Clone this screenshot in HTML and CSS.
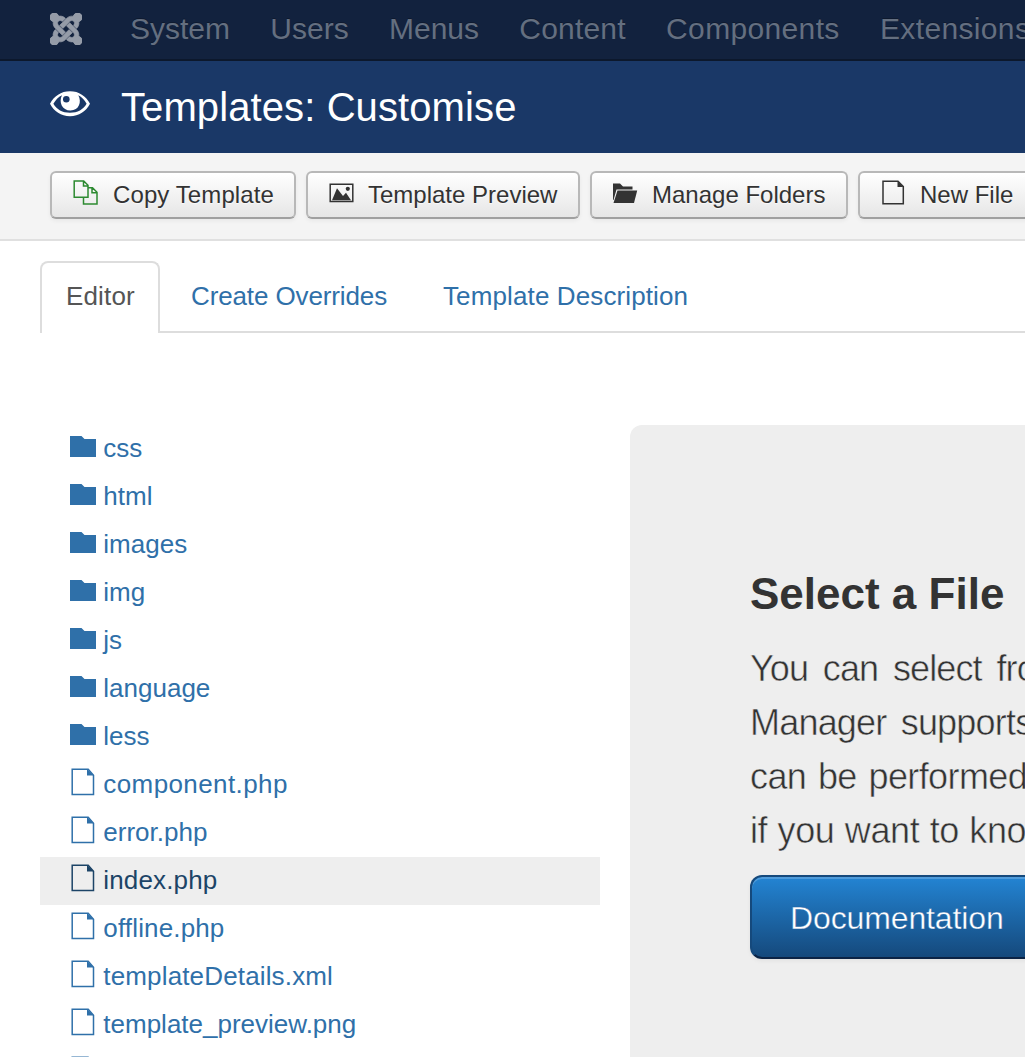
FILE: index.html
```html
<!DOCTYPE html>
<html lang="en">
<head>
<meta charset="utf-8">
<title>Templates: Customise</title>
<link rel="stylesheet" href="styles.css">
</head>
<body>
<svg class="defs" aria-hidden="true">
  <defs>
    <g id="strand"><path d="M16.719 14.759L14.22 17.26l-2.37 2.37-.462.466c-1.368 1.365-3.297 1.83-5.047 1.397-.327 1.424-1.604 2.49-3.13 2.49C1.438 23.983 0 22.547 0 20.772c0-1.518 1.055-2.789 2.469-3.123-.446-1.76.016-3.705 1.396-5.08l.179-.18 2.37 2.37-.184.181c-.769.779-.769 2.024 0 2.789.771.78 2.022.78 2.787 0l.465-.465 2.367-2.371 2.502-2.506z" stroke="currentColor" stroke-width=".5"/><circle cx="3.300" cy="20.700" r="3.500"/></g>
    <symbol id="folder" viewBox="0 0 34 48"><path fill="currentColor" d="M0 11h11.5l3 3H26v18H0z"/></symbol>
    <symbol id="file" viewBox="0 0 34 48"><path fill="none" stroke="currentColor" stroke-width="1.5" d="M2.200 8.300h16l5.300 6v19.200H2.200z"/><path fill="currentColor" d="M17 8l7 6.600h-7z"/></symbol>
  </defs>
</svg>
<nav class="navbar">
  <svg class="brand" viewBox="0 0 24 24" fill="currentColor"><use href="#strand"/><use href="#strand" transform="rotate(90 12 12)"/><use href="#strand" transform="rotate(180 12 12)"/><use href="#strand" transform="rotate(270 12 12)"/></svg>
  <a>System</a><a>Users</a><a>Menus</a><a class="content-menu">Content</a><a class="wide">Components</a><a class="wide">Extensions</a>
</nav>
<header class="header">
  <svg class="eye" viewBox="0 0 40 26"><path fill="#fff" fill-rule="evenodd" d="M0 12.8C4 5 11 .2 20 .2S36 5 40 12.8C36 20.400 29 25.200 20 25.200S4 20.400 0 12.800zM3.400 12.800C6.500 18.500 12.500 21.800 20 21.800s13.500-3.300 16.600-9C34.500 9 31.800 6 28.300 4.300 32 11 29 19.500 20.500 19.500S8.500 11 12 4.200C8.200 6 5.500 9 3.400 12.800z"/><circle cx="16.300" cy="8.200" r="3.300" fill="#1a3867"/></svg>
  <h1>Templates: Customise</h1>
</header>
<div class="toolbar">
  <button class="btn copy"><svg viewBox="0 0 26 26" fill="none" stroke="#2d8a31" stroke-width="1.500"><path d="M10.500 17.300H1.200V1h9.500l4.300 4.300v2.200M10.500 1v5H15M15 7.700h4.500l4.500 4.500v11.800H10.500v-6.700H15V5M19 7.700v5H24"/></svg>Copy Template</button>
  <button class="btn preview"><svg viewBox="0 0 26 26"><path fill="none" stroke="currentColor" stroke-width="1.500" d="M1.200 4.200h22.600v17.300H1.200z"/><path fill="currentColor" d="M3 20.300L8 8.200 14 16l3-3.200 5 7.500z"/><circle cx="18.800" cy="8.800" r="2.100" fill="currentColor"/></svg>Template Preview</button>
  <button class="btn folders"><svg viewBox="0 0 26 26" fill="currentColor"><path d="M0 3.500h7l3 3h9.500v3H3.500L.500 20H0z"/><path d="M4.500 10.500H24.200L21 23H.500z"/></svg>Manage Folders</button>
  <button class="btn newfile"><svg viewBox="0 0 26 26"><path fill="none" stroke="currentColor" stroke-width="1.500" d="M2 1.200h15L22.300 6.500v17.300H2z"/><path fill="currentColor" d="M16.500 1l6 6h-6z"/></svg>New File</button>
</div>
<ul class="tabs"><li class="active">Editor</li><li class="overrides">Create Overrides</li><li class="description">Template Description</li></ul>
<main class="content">
  <ul class="tree">
    <li><svg><use href="#folder"/></svg>css</li>
    <li><svg><use href="#folder"/></svg>html</li>
    <li><svg><use href="#folder"/></svg>images</li>
    <li><svg><use href="#folder"/></svg>img</li>
    <li><svg><use href="#folder"/></svg>js</li>
    <li><svg><use href="#folder"/></svg>language</li>
    <li><svg><use href="#folder"/></svg>less</li>
    <li class="file long"><svg><use href="#file"/></svg>component.php</li>
    <li><svg><use href="#file"/></svg>error.php</li>
    <li class="file selected"><svg><use href="#file"/></svg>index.php</li>
    <li class="file"><svg><use href="#file"/></svg>offline.php</li>
    <li class="file"><svg><use href="#file"/></svg>templateDetails.xml</li>
    <li><svg><use href="#file"/></svg>template_preview.png</li>
    <li><svg><use href="#file"/></svg></li>
  </ul>
  <section class="hero">
    <h2>Select a File</h2>
    <p><span class="l1">You can select from</span><span class="l2">Manager supports</span><span class="l3">can be performed</span><span class="l4">if you want to know</span></p>
    <a class="docs">Documentation</a>
  </section>
</main>
</body>
</html>
```
FILE: styles.css
```css
* { box-sizing: border-box; }
html, body { height: 1057px; overflow: hidden; }
body {
  margin: 0;
  background: #fff;
  color: #333;
  font: 26px/48px "Liberation Sans", Arial, sans-serif;
  white-space: nowrap;
}
ul { list-style: none; margin: 0; padding: 0; }
h1, h2, p { margin: 0; }
svg { display: block; flex: none; }
.defs { position: absolute; width: 0; height: 0; }

.navbar {
  display: flex;
  height: 61px;
  padding-left: 50px;
  background: #12223e;
  border-bottom: 2px solid #0c182c;
  color: #646f80;
  font-size: 30px;
  line-height: 58px;
  text-shadow: 0 -1px 0 rgba(0, 0, 0, .25);
}
.navbar a { margin-right: 40.300px; }
.navbar .content-menu { letter-spacing: .2px; }
.navbar .wide { letter-spacing: .35px; }
.brand { width: 32px; height: 32px; margin: 13px 48px 0 0; color: #959ca8; }

.header {
  display: flex;
  height: 92px;
  padding-left: 50px;
  background: #1a3867;
  color: #fff;
}
.header h1 { font-size: 40px; font-weight: 400; line-height: 92px; letter-spacing: .1px; }
.eye { width: 40px; height: 26px; margin: 30px 31px 0 0; }

.toolbar {
  display: flex;
  gap: 10px;
  height: 88px;
  padding: 18px 0 0 50px;
  background: #f4f4f4;
  border-bottom: 2px solid #e0e0e0;
}
.btn {
  display: flex;
  flex: none;
  height: 48px;
  padding: 0 0 0 21px;
  border: 2px solid #b8b8b8;
  border-bottom-color: #a0a0a0;
  border-radius: 6px;
  background: linear-gradient(#fff, #e6e6e6);
  box-shadow: 0 2px 4px rgba(0, 0, 0, .05);
  color: #333;
  font: 24px/44px "Liberation Sans", Arial, sans-serif;
  text-shadow: 0 1px 1px rgba(255, 255, 255, .75);
}
.btn svg { width: 26px; height: 26px; margin: 7px 13px 0 0; }
.copy { width: 246px; letter-spacing: .1px; }
.copy svg { margin-right: 14px; }
.preview { width: 274px; }
.folders { width: 258px; }
.newfile { width: 200px; }

.tabs {
  display: flex;
  height: 92px;
  margin-left: 40px;
  padding-top: 20px;
  color: #2f70a9;
  line-height: 70px;
}
.tabs li { border-bottom: 2px solid #ddd; }
.tabs .active {
  width: 120px;
  padding-left: 24px;
  border: 2px solid #ddd;
  border-bottom: 0;
  border-radius: 8px 8px 0 0;
  color: #555;
  line-height: 67px;
  letter-spacing: .15px;
}
.tabs .overrides { width: 252px; padding-left: 31px; letter-spacing: -.12px; }
.tabs .description { flex: 1; padding-left: 31px; letter-spacing: .12px; }

.content { display: flex; height: 724px; padding: 92px 0 0 40px; overflow: hidden; }
.tree { flex: none; width: 560px; color: #2f70a9; }
.tree li { display: flex; height: 48px; padding-left: 30px; line-height: 47px; }
.tree svg { width: 34px; height: 48px; margin-right: -.7px; }
.tree .file { letter-spacing: .15px; }
.tree .long { letter-spacing: .4px; }
.tree .selected { background: #eee; color: #1c4467; }

.hero {
  flex: none;
  width: 500px;
  height: 700px;
  margin-left: 30px;
  padding: 142px 0 0 120px;
  background: #eee;
  border-radius: 12px;
}
.hero h2 { font-size: 44px; line-height: 54px; }
.hero p {
  padding-top: 21px;
  font-size: 36px;
  line-height: 54px;
  -webkit-text-stroke: .5px #eee;
}
.hero p span { display: block; }
.l1 { letter-spacing: -.9px; word-spacing: 5.700px; }
.l2 { letter-spacing: -.8px; word-spacing: 5px; }
.l3 { letter-spacing: -.6px; word-spacing: 2.300px; }
.l4 { letter-spacing: -.4px; word-spacing: .800px; }
.docs {
  display: block;
  width: 300px;
  height: 84px;
  margin-top: 17px;
  padding-left: 38px;
  border: 2px solid #15497c;
  border-bottom-color: #0b2345;
  border-radius: 12px;
  background: linear-gradient(#2384d3, #15497c);
  box-shadow: inset 0 2px 0 rgba(255, 255, 255, .2), 0 2px 4px rgba(0, 0, 0, .05);
  color: #fff;
  font-size: 32px;
  line-height: 82px;
  letter-spacing: -.13px;
  -webkit-text-stroke: .4px #1d65a6;
}
```
